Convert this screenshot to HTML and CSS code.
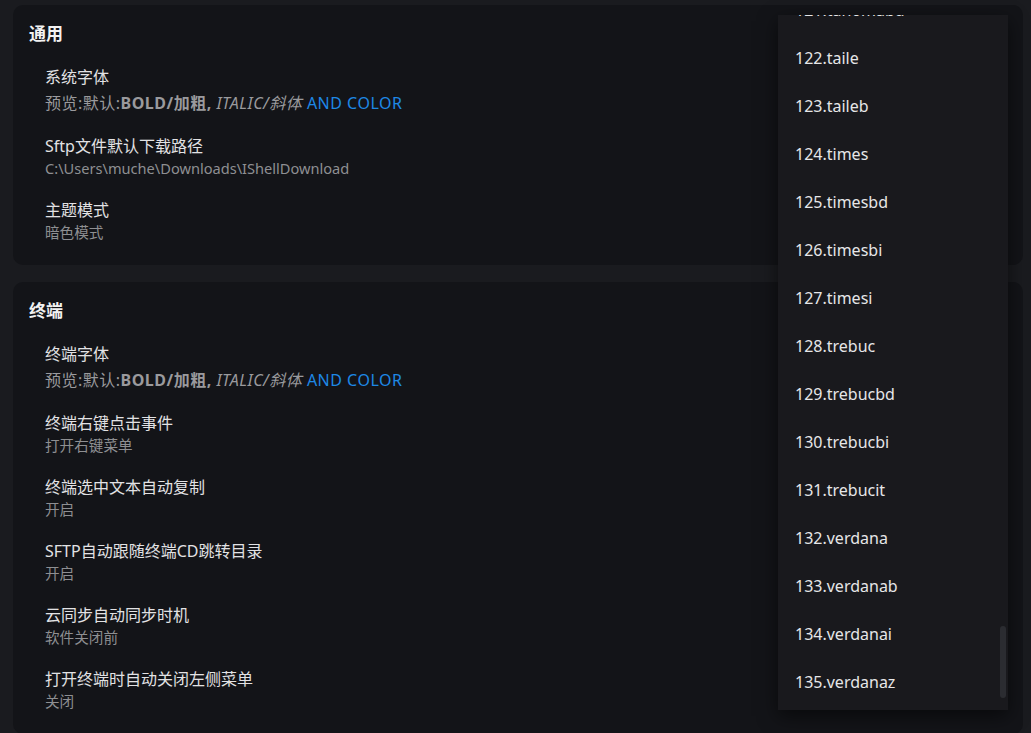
FILE: index.html
```html
<!DOCTYPE html>
<html lang="zh-CN">
<head>
<meta charset="utf-8">
<title>设置</title>
<link rel="stylesheet" href="styles.css">
</head>
<body>
<div class="settings">

  <div class="card">
    <div class="card-title">通用</div>
    <div class="items">
      <div class="item">
        <div class="item-name">系统字体</div>
        <div class="preview">预览:默认:<b>BOLD/加粗,</b> <i>ITALIC/斜体</i> <span class="accent">AND COLOR</span></div>
      </div>
      <div class="item">
        <div class="item-name">Sftp文件默认下载路径</div>
        <div class="item-value">C:\Users\muche\Downloads\IShellDownload</div>
      </div>
      <div class="item">
        <div class="item-name">主题模式</div>
        <div class="item-value">暗色模式</div>
      </div>
    </div>
  </div>

  <div class="card">
    <div class="card-title">终端</div>
    <div class="items">
      <div class="item">
        <div class="item-name">终端字体</div>
        <div class="preview">预览:默认:<b>BOLD/加粗,</b> <i>ITALIC/斜体</i> <span class="accent">AND COLOR</span></div>
      </div>
      <div class="item">
        <div class="item-name">终端右键点击事件</div>
        <div class="item-value">打开右键菜单</div>
      </div>
      <div class="item">
        <div class="item-name">终端选中文本自动复制</div>
        <div class="item-value">开启</div>
      </div>
      <div class="item">
        <div class="item-name">SFTP自动跟随终端CD跳转目录</div>
        <div class="item-value">开启</div>
      </div>
      <div class="item">
        <div class="item-name">云同步自动同步时机</div>
        <div class="item-value">软件关闭前</div>
      </div>
      <div class="item">
        <div class="item-name">打开终端时自动关闭左侧菜单</div>
        <div class="item-value">关闭</div>
      </div>
    </div>
  </div>

</div>

<!-- font picker popup, scrolled near the end of the list -->
<div class="dropdown">
  <div class="options">
    <div class="option">121.tahomabd</div>
    <div class="option">122.taile</div>
    <div class="option">123.taileb</div>
    <div class="option">124.times</div>
    <div class="option">125.timesbd</div>
    <div class="option">126.timesbi</div>
    <div class="option">127.timesi</div>
    <div class="option">128.trebuc</div>
    <div class="option">129.trebucbd</div>
    <div class="option">130.trebucbi</div>
    <div class="option">131.trebucit</div>
    <div class="option">132.verdana</div>
    <div class="option">133.verdanab</div>
    <div class="option">134.verdanai</div>
    <div class="option">135.verdanaz</div>
  </div>
  <div class="scroll-thumb"></div>
</div>
</body>
</html>
```

FILE: styles.css
```css
/* Settings page, dark theme */

html, body
{ margin: 0;
  height: 100%;
  overflow: hidden;
}

body
{ background-color: #1a1b1f;
  color: #e4e4e6;
  font-family: "Noto Sans", "Noto Sans CJK SC", sans-serif;
}

div.settings
{ display: flex;
  flex-direction: column;
  gap: 17px;
  padding: 5px 8px 0 13px;
}

div.card
{ background-color: #131418;
  border-radius: 10px;
  padding: 17px 16px 22px 16px;
}

div.card-title
{ font-size: 17px;
  line-height: 24px;
  font-weight: bold;
  color: #f2f2f2;
}

div.items
{ display: flex;
  flex-direction: column;
  gap: 20px;
  margin-top: 20px;
  padding-left: 16px;
}

div.item-name
{ font-size: 16px;
  line-height: 22px;
  color: #e2e2e4;
}

div.item-value
{ font-size: 14.6px;
  line-height: 22px;
  color: #8e8f92;
}

div.preview
{ font-size: 16px;
  line-height: 27px;
  padding-top: 2px;
  margin-bottom: -2px;
  letter-spacing: 0.5px;
  color: #9a9a9d;
}

div.preview b
{ font-weight: bold;
}

span.accent
{ color: #1e88e5;
}

/* Popup list */

div.dropdown
{ position: absolute;
  left: 778px;
  top: 15px;
  width: 230px;
  height: 695px;
  background-color: #19191d;
  box-shadow: 0 6px 18px rgba(0, 0, 0, 0.55);
  overflow: hidden;
}

div.options
{ margin-top: -29px;
}

div.option
{ height: 48px;
  line-height: 48px;
  padding-left: 17px;
  font-size: 16px;
  color: #e6e6e8;
  white-space: nowrap;
}

div.scroll-thumb
{ position: absolute;
  right: 2px;
  top: 611px;
  width: 6px;
  height: 72px;
  border-radius: 3px;
  background-color: #2b2c31;
}
```
